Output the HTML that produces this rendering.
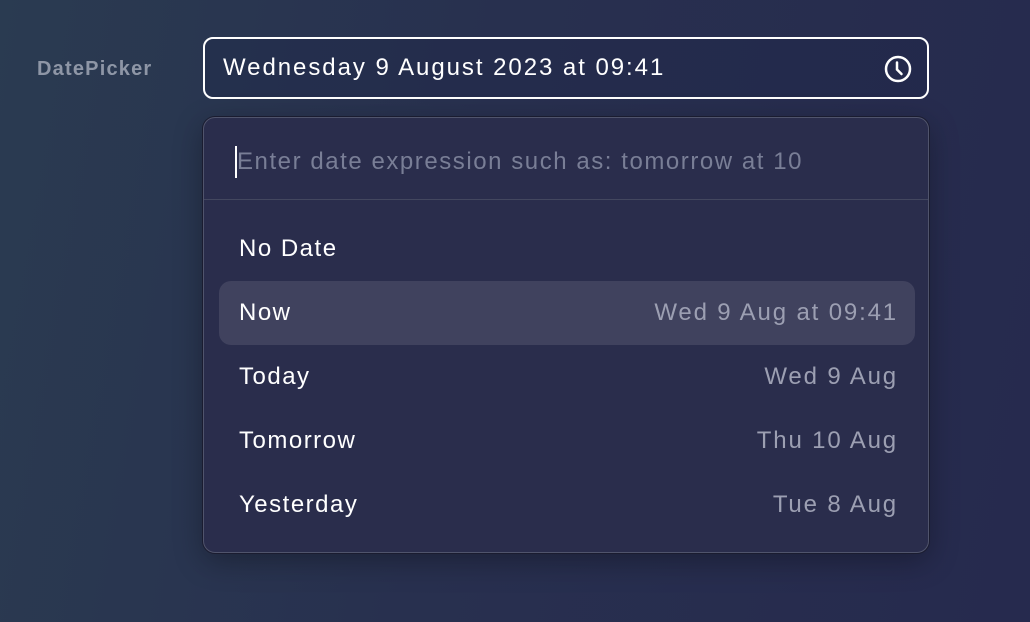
<!DOCTYPE html>
<html><head><style>
body{margin:0;width:1030px;height:622px;overflow:hidden;background:linear-gradient(100deg,#2a3b51 0%,#28304f 45%,#262a4e 100%);font-family:"Liberation Sans",sans-serif;position:relative}
.lab{position:absolute;left:37px;top:58px;font-size:20px;font-weight:bold;color:#8e96a6;letter-spacing:1.2px}
.field{position:absolute;left:203px;top:37px;width:722px;height:58px;border:2px solid #fff;border-radius:10px;background:rgba(30,38,72,0.35)}
.field span{position:absolute;left:18px;top:15px;font-size:24px;color:#fff;letter-spacing:1.95px}
.field svg{position:absolute;left:679px;top:16px}
.pop{position:absolute;left:203px;top:117px;width:724px;height:434px;border:1px solid #50546c;border-radius:12px;background:#2a2d4c;box-shadow:0 0 0 1px #1a1c30,0 8px 30px rgba(0,0,0,0.3)}
.ph{position:absolute;left:31px;top:28px;font-size:24px;color:#797e96;border-left:2px solid #fff;line-height:32px;letter-spacing:1.55px}
.div{position:absolute;left:0;right:0;top:81px;height:1px;background:#43475f}
.it{position:absolute;left:15px;width:696px;height:64px;border-radius:12px}
.it .l{position:absolute;left:20px;top:18px;font-size:24px;color:#fff;letter-spacing:1.5px}
.it .r{position:absolute;right:15px;top:18px;font-size:24px;color:#9c9fb2;letter-spacing:1.85px;margin-right:-0px}
.it .r{right:17px}
.hl{background:#40425e}
</style></head><body>
<div class="lab">DatePicker</div>
<div class="field"><span>Wednesday 9 August 2023 at 09:41</span>
<svg width="28" height="28" viewBox="0 0 28 28"><circle cx="14" cy="14" r="12" fill="none" stroke="#fff" stroke-width="2.5"/><path d="M13 7.5V14.5L17.5 19" fill="none" stroke="#fff" stroke-width="2.5" stroke-linecap="round"/></svg></div>
<div class="pop">
<div class="ph">Enter date expression such as: tomorrow at 10</div>
<div class="div"></div>
<div class="it" style="top:99px"><span class="l">No Date</span></div>
<div class="it hl" style="top:163px"><span class="l">Now</span><span class="r">Wed 9 Aug at 09:41</span></div>
<div class="it" style="top:227px"><span class="l">Today</span><span class="r">Wed 9 Aug</span></div>
<div class="it" style="top:291px"><span class="l">Tomorrow</span><span class="r">Thu 10 Aug</span></div>
<div class="it" style="top:355px"><span class="l">Yesterday</span><span class="r">Tue 8 Aug</span></div>
</div>
</body></html>
